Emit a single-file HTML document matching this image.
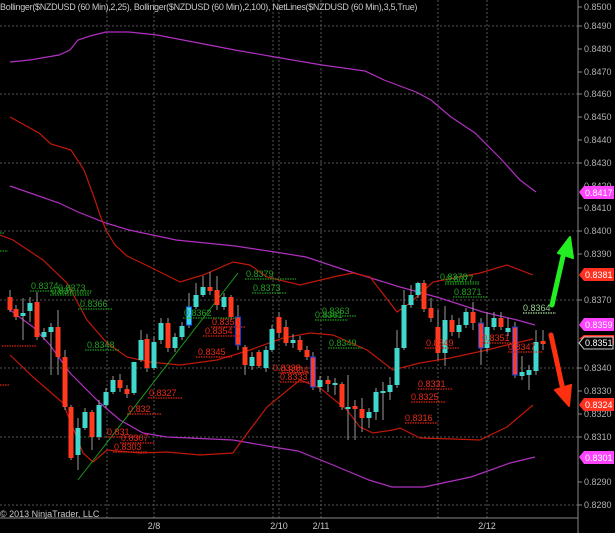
<!DOCTYPE html>
<html><head><meta charset="utf-8"><style>
html,body{margin:0;padding:0;background:#000;}
svg{display:block;font-family:"Liberation Sans",sans-serif;}
</style></head><body>
<svg width="615" height="533" viewBox="0 0 615 533" xmlns="http://www.w3.org/2000/svg">
<rect width="615" height="533" fill="#000"/>
<!-- grid -->
<g stroke="#555" stroke-width="1" stroke-dasharray="2,2">
<line x1="0" y1="26" x2="578" y2="26"/><line x1="0" y1="94" x2="578" y2="94"/><line x1="0" y1="163" x2="578" y2="163"/><line x1="0" y1="231" x2="578" y2="231"/><line x1="0" y1="300" x2="578" y2="300"/><line x1="0" y1="368" x2="578" y2="368"/><line x1="0" y1="437" x2="578" y2="437"/><line x1="0" y1="505" x2="578" y2="505"/>
<line x1="107" y1="0" x2="107" y2="518"/><line x1="154" y1="0" x2="154" y2="518"/><line x1="273" y1="0" x2="273" y2="518"/><line x1="279" y1="0" x2="279" y2="518"/><line x1="321" y1="0" x2="321" y2="518"/><line x1="438" y1="0" x2="438" y2="518"/><line x1="487" y1="0" x2="487" y2="518"/>
</g>
<line x1="578" y1="0" x2="578" y2="533" stroke="#888"/>
<line x1="0" y1="518" x2="578" y2="518" stroke="#888"/>
<text x="0" y="10" font-size="9" fill="#c8c8c8" letter-spacing="-0.3">Bollinger($NZDUSD (60 Min),2,25), Bollinger($NZDUSD (60 Min),2,100), NetLines($NZDUSD (60 Min),3,5,True)</text>
<text x="0" y="517" font-size="9" fill="#c8c8c8">© 2013 NinjaTrader, LLC</text>
<g font-size="9" fill="#c8c8c8" text-anchor="middle">
<text x="154" y="529">2/8</text><text x="279" y="529">2/10</text><text x="321" y="529">2/11</text><text x="487" y="529">2/12</text>
</g>
<!-- axis labels -->
<g font-size="9" fill="#b0b0b0">
<text x="584" y="10">0.8500</text><text x="584" y="29">0.8490</text><text x="584" y="52">0.8480</text><text x="584" y="75">0.8470</text><text x="584" y="97">0.8460</text><text x="584" y="120">0.8450</text><text x="584" y="143">0.8440</text><text x="584" y="166">0.8430</text><text x="584" y="189">0.8420</text><text x="584" y="211">0.8410</text><text x="584" y="234">0.8400</text><text x="584" y="257">0.8390</text><text x="584" y="303">0.8370</text><text x="584" y="371">0.8340</text><text x="584" y="394">0.8330</text><text x="584" y="417">0.8320</text><text x="584" y="440">0.8310</text><text x="584" y="485">0.8290</text><text x="584" y="508">0.8280</text>
</g>
<g stroke="#888"><line x1="578" y1="7" x2="582" y2="7"/><line x1="578" y1="26" x2="582" y2="26"/><line x1="578" y1="49" x2="582" y2="49"/><line x1="578" y1="72" x2="582" y2="72"/><line x1="578" y1="94" x2="582" y2="94"/><line x1="578" y1="117" x2="582" y2="117"/><line x1="578" y1="140" x2="582" y2="140"/><line x1="578" y1="163" x2="582" y2="163"/><line x1="578" y1="208" x2="582" y2="208"/><line x1="578" y1="231" x2="582" y2="231"/><line x1="578" y1="254" x2="582" y2="254"/><line x1="578" y1="300" x2="582" y2="300"/><line x1="578" y1="368" x2="582" y2="368"/><line x1="578" y1="391" x2="582" y2="391"/><line x1="578" y1="414" x2="582" y2="414"/><line x1="578" y1="437" x2="582" y2="437"/><line x1="578" y1="482" x2="582" y2="482"/><line x1="578" y1="505" x2="582" y2="505"/></g>
<!-- tags -->
<g font-size="9" fill="#fff">
<path d="M579,192 L584,186 L614,186 L614,199 L584,199Z" fill="#ff44ff"/><text x="585" y="196">0.8417</text>
<path d="M579,275 L584,268 L614,268 L614,281 L584,281Z" fill="#ff3020"/><text x="585" y="278">0.8381</text>
<path d="M579,325 L584,318 L614,318 L614,331 L584,331Z" fill="#ff44ff"/><text x="585" y="328">0.8359</text>
<path d="M579,339 L584,335 L614,335 L614,345Z" fill="#ff3020"/>
<path d="M579,343 L584,337 L613,337 L613,349 L584,349Z" fill="#000" stroke="#ccc"/><text x="585" y="346">0.8351</text>
<path d="M579,405 L584,398 L614,398 L614,411 L584,411Z" fill="#ff3020"/><text x="585" y="408">0.8324</text>
<path d="M579,457 L584,451 L614,451 L614,464 L584,464Z" fill="#ff44ff"/><text x="585" y="461">0.8301</text>
</g>
<!-- bands -->
<g fill="none" stroke-width="1.2">
<path stroke="#b030c0" d="M10,62 L30,60 L59,55 L70,50 L78,40 L90,36 L106,32 L129,32 L157,35 L235,50 L275,57 L322,65 L365,71 L384,80 L416,92 L431,100 L451,117 L475,133 L500,158 L520,180 L536,192"/>
<path stroke="#b030c0" d="M10,186 L59,203 L78,212 L106,223 L129,230 L176,240 L235,246 L275,252 L306,257 L345,270 L400,287 L440,298 L483,312 L517,320 L535,325"/>
<path stroke="#b030c0" d="M10,310 L33,327 L50,345 L70,373 L100,403 L120,420 L143,433 L167,437 L233,440 L273,447 L298,451 L333,465 L369,480 L392,487 L424,487 L471,477 L510,463 L535,457"/>
<path stroke="#c01808" d="M10,117 L39,133 L51,144 L71,150 L84,170 L95,200 L100,215 L106,230 L115,245 L127,256 L150,267 L180,282 L203,275 L233,262 L250,265 L267,277 L300,285 L333,277 L353,273 L370,277 L397,312 L410,303 L433,282 L480,273 L507,265 L533,275"/>
<path stroke="#c01808" d="M0,235 L13,240 L43,260 L67,283 L87,320 L107,343 L127,357 L150,362 L180,365 L217,360 L250,350 L283,338 L310,333 L333,335 L367,350 L393,370 L420,363 L450,358 L487,350 L507,345 L533,339"/>
<path stroke="#c01808" d="M10,355 L33,377 L63,403 L83,453 L93,462 L107,450 L140,453 L167,452 L200,455 L233,453 L240,443 L267,407 L300,380 L320,388 L347,410 L360,427 L373,433 L393,430 L400,428 L420,438 L453,439 L480,440 L507,427 L533,405"/>
</g>
<line x1="78" y1="480" x2="238" y2="273" stroke="#1a9a1a" stroke-width="1"/>
<!-- wicks -->
<g stroke="#9a9a9a" stroke-width="1">
<path d="M10,290V312M16,305V320M23,298V340M30,297V322M37,292V340M44,328V340M51,323V375M58,310V375M65,350V410M71,405V460M78,418V470M85,408V430M92,410V450M99,400V440M106,388V408M113,376V394M120,374V392M127,385V398M134,362V395M141,330V362M147,334V372M154,336V370M161,318V344M168,318V352M175,333V352M182,322V340M189,293V328M196,283V309M203,276V297M210,272V295M217,276V310M224,293V310M231,295V320M238,305V350M245,345V375M252,352V370M259,350V368M266,346V372M272,325V352M279,312V338M286,320V346M293,334V348M300,336V352M307,346V360M313,352V390M320,376V392M328,376V392M335,378V395M342,382V410M348,375V440M355,400V440M362,398V432M369,408V428M376,388V420M383,382V420M390,377V400M397,330V388M404,290V350M411,285V308M418,282V298M424,280V312M431,298V322M438,310V360M445,306V366M452,315V336M459,318V338M466,308V328M473,302V330M481,318V365M487,312V352M494,312V330M501,312V330M508,318V336M515,322V378M522,356V380M529,365V390M536,330V375M543,330V350"/>
</g>
<!-- candles -->
<g stroke="none">
<g fill="#ff3a1f">
<rect x="7.5" y="297" width="5" height="13"/><rect x="13.5" y="309" width="5" height="8"/><rect x="34.5" y="302" width="5" height="35"/><rect x="55.5" y="327" width="5" height="30"/><rect x="62.5" y="357" width="5" height="50"/><rect x="68.5" y="407" width="5" height="51"/><rect x="89.5" y="412" width="5" height="25"/><rect x="117.5" y="380" width="5" height="8"/><rect x="124.5" y="389" width="5" height="5"/><rect x="144.5" y="339" width="5" height="29"/><rect x="165.5" y="323" width="5" height="25"/><rect x="207.5" y="287" width="5" height="4"/><rect x="214.5" y="290" width="5" height="15"/><rect x="228.5" y="297" width="5" height="20"/><rect x="242.5" y="347" width="5" height="18"/><rect x="256.5" y="352" width="5" height="14"/><rect x="276.5" y="317" width="5" height="16"/><rect x="283.5" y="327" width="5" height="16"/><rect x="297.5" y="340" width="5" height="10"/><rect x="304.5" y="350" width="5" height="7"/><rect x="325.5" y="380" width="5" height="4"/><rect x="339.5" y="384" width="5" height="23"/><rect x="352.5" y="406" width="5" height="3"/><rect x="359.5" y="409" width="5" height="9"/><rect x="421.5" y="283" width="5" height="26"/><rect x="428.5" y="308" width="5" height="10"/><rect x="435.5" y="327" width="5" height="26"/><rect x="449.5" y="320" width="5" height="12"/><rect x="470.5" y="312" width="5" height="11"/><rect x="498.5" y="318" width="5" height="9"/><rect x="540.5" y="341" width="5" height="3"/>
</g>
<g fill="#40d8cc">
<rect x="20.5" y="313" width="5" height="3"/><rect x="27.5" y="303" width="5" height="8"/><rect x="41.5" y="332" width="5" height="5"/><rect x="48.5" y="327" width="5" height="5"/><rect x="75.5" y="428" width="5" height="27"/><rect x="82.5" y="412" width="5" height="16"/><rect x="96.5" y="405" width="5" height="32"/><rect x="103.5" y="392" width="5" height="13"/><rect x="110.5" y="380" width="5" height="12"/><rect x="131.5" y="362" width="5" height="31"/><rect x="138.5" y="340" width="5" height="20"/><rect x="151.5" y="342" width="5" height="26"/><rect x="158.5" y="323" width="5" height="17"/><rect x="172.5" y="337" width="5" height="11"/><rect x="179.5" y="326" width="5" height="11"/><rect x="193.5" y="295" width="5" height="12"/><rect x="200.5" y="287" width="5" height="8"/><rect x="221.5" y="297" width="5" height="10"/><rect x="249.5" y="357" width="5" height="9"/><rect x="263.5" y="350" width="5" height="18"/><rect x="269.5" y="329" width="5" height="21"/><rect x="290.5" y="340" width="5" height="3"/><rect x="317.5" y="380" width="5" height="7"/><rect x="332.5" y="383" width="5" height="2"/><rect x="345.5" y="407" width="5" height="2"/><rect x="366.5" y="412" width="5" height="6"/><rect x="373.5" y="392" width="5" height="20"/><rect x="380.5" y="391" width="5" height="2"/><rect x="387.5" y="385" width="5" height="7"/><rect x="394.5" y="348" width="5" height="37"/><rect x="401.5" y="305" width="5" height="43"/><rect x="408.5" y="295" width="5" height="10"/><rect x="415.5" y="283" width="5" height="12"/><rect x="442.5" y="320" width="5" height="33"/><rect x="456.5" y="325" width="5" height="7"/><rect x="463.5" y="312" width="5" height="13"/><rect x="484.5" y="327" width="5" height="21"/><rect x="491.5" y="318" width="5" height="9"/><rect x="505.5" y="328" width="5" height="4"/><rect x="519.5" y="372" width="5" height="4"/><rect x="526.5" y="370" width="5" height="5"/><rect x="533.5" y="342" width="5" height="29"/>
</g>
<rect x="186.5" y="307" width="5" height="18" fill="#40d8cc" stroke="#1060ff" stroke-width="1"/>
<rect x="235.5" y="317" width="5" height="28" fill="#ff3a1f" stroke="#1040e0" stroke-width="1"/>
<rect x="310.5" y="357" width="5" height="30" fill="#ff3a1f" stroke="#1040e0" stroke-width="1"/>
<rect x="478.5" y="323" width="5" height="25" fill="#ff3a1f" stroke="#1040e0" stroke-width="1"/>
<rect x="512.5" y="327" width="5" height="48" fill="#ff3a1f" stroke="#1040e0" stroke-width="1"/>
</g>
<!-- net lines -->
<g stroke-width="1.2" stroke-dasharray="1.5,1" fill="none">
<g stroke="#1e9a1e">
<path d="M30,291H92M52,293H92M50,295H90M78,309H113M85,350H120M183,318H238M245,279H296M252,293H286M315,320H348M322,316H356M328,348H362M445,282H480M445,284H480M453,297H487M0,251H8M0,233H4"/>
</g>
<path stroke="#b0e0a0" d="M523,313H556"/>
<g stroke="#e02010">
<path d="M2,346H37M148,398H183M127,414H162M106,437H140M120,443H155M113,452H148M211,327H245M203,336H240M196,357H232M280,373H310M280,382H310M425,348H460M418,389H453M411,402H446M405,423H438M482,343H514M508,352H542M-5,385H10"/>
</g>
</g>
<g font-size="9" fill="#22a022">
<text x="31" y="289">0.8374</text><text x="58" y="291">0.8373</text><text x="51" y="294">0.837</text><text x="80" y="307">0.8366</text><text x="87" y="348">0.8348</text><text x="184" y="316">0.8362</text><text x="246" y="277">0.8379</text><text x="253" y="291">0.8373</text><text x="315" y="318">0.8361</text><text x="322" y="314">0.8363</text><text x="329" y="346">0.8349</text><text x="440" y="280">0.8378</text><text x="446" y="282">0.8377</text><text x="454" y="295">0.8371</text>
</g>
<text x="523" y="311" font-size="9" fill="#90d090">0.8364</text>
<g font-size="9" fill="#e82a18">
<text x="149" y="396">0.8327</text><text x="128" y="412">0.832</text><text x="107" y="435">0.831</text><text x="121" y="441">0.8307</text><text x="114" y="450">0.8303</text><text x="212" y="325">0.8358</text><text x="205" y="334">0.8354</text><text x="198" y="355">0.8345</text><text x="273" y="371">0.8338</text><text x="281" y="373">0.8334</text><text x="280" y="380">0.8333</text><text x="426" y="346">0.8349</text><text x="418" y="387">0.8331</text><text x="411" y="400">0.8325</text><text x="405" y="421">0.8316</text><text x="482" y="341">0.8351</text><text x="508" y="350">0.8347</text>
</g>
<!-- arrows -->
<line x1="552" y1="305" x2="564" y2="252" stroke="#22ee22" stroke-width="5" stroke-linecap="round"/>
<path d="M570,237 L573,258 L558,253 Z" fill="#22ee22" stroke="#22ee22" stroke-width="2" stroke-linejoin="round"/>
<line x1="551" y1="335" x2="563" y2="390" stroke="#ff3010" stroke-width="5" stroke-linecap="round"/>
<path d="M569,406 L555,390 L571,385 Z" fill="#ff3010" stroke="#ff3010" stroke-width="2" stroke-linejoin="round"/>
</svg>
</body></html>
